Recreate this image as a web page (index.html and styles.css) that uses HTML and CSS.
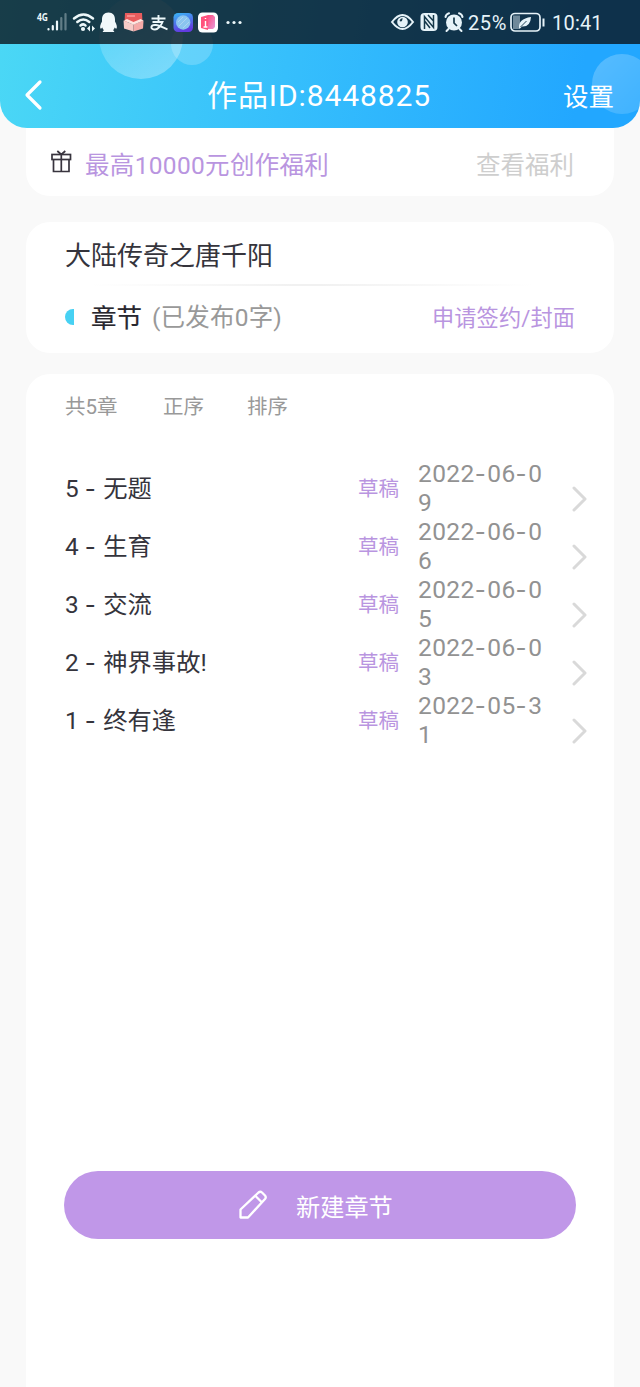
FILE: index.html
```html
<!DOCTYPE html>
<html lang="zh-CN">
<head>
<meta charset="utf-8">
<title>作品ID:8448825</title>
<link rel="stylesheet" href="styles.css">
</head>
<body>
<header class="top">
  <i class="bubble bubble-large"></i><i class="bubble bubble-small"></i><i class="bubble bubble-right"></i>
  <div class="status">
    <svg class="status-left" width="250" height="44" viewBox="0 0 250 44">
      <defs>
        <linearGradient id="app" x1="0" y1="0" x2="0.3" y2="1"><stop stop-color="#38b8f5"/><stop offset="1" stop-color="#623be0"/></linearGradient>
        <linearGradient id="info" x1="0" y1="0" x2="1" y2="1"><stop stop-color="#ff4b7d"/><stop offset="1" stop-color="#e79bdc"/></linearGradient>
      </defs>
      <text class="network" x="37" y="21" textLength="11" lengthAdjust="spacingAndGlyphs">4G</text>
      <g stroke="#edf8fa" stroke-width="2.2" stroke-linecap="round"><path d="M48.5 29v.5M52.8 26v3.5M57 21.500v8"/><path d="M61.300 18v11.500M65.500 14v15.500" opacity=".35"/></g>
      <g fill="none" stroke="#edf8fa" stroke-width="2.5" stroke-linecap="round"><path d="M74 18.500q9.500-8 19 0M77.300 22q6-5 12 0M80.500 25.500q3-2.300 5 0"/></g>
      <circle cx="83" cy="29" r="2.100" fill="#edf8fa"/>
      <path d="M90 25.500v6l-3-3zM92 25.500v6l3-3z" fill="#edf8fa"/>
      <path d="M108.500 12.500c-4.500 0-6.500 3-6.500 7v2c-1.500 2.500-2.500 5.500-1.500 7 .6.500 1.300-.5 1.800-1 .3 1.200.9 2 1.700 2.700-2 1-1.400 1.800 0 1.800h9c1.400 0 2-.8 0-1.800.8-.7 1.400-1.500 1.700-2.700.5.500 1.200 1.500 1.800 1 1-1.500 0-4.500-1.500-7v-2c0-4-2-7-6.500-7z" fill="#f1f8fa"/>
      <path d="M125 13h17l.5 9h-18z" fill="#e85c5d"/><path d="M127 16h8" stroke="#ffaaa8" stroke-width="1.200"/>
      <path d="M123.500 20.500l10 4v7l-9.500-3z" fill="#f7cbc7"/><path d="M143.500 20.500l-10 4v7l9.500-3z" fill="#f5aaa8"/><path d="M124 20.500l3-1.500 6.500 3 7-3 3 1.500-10 4.200z" fill="#fee4df"/>
      <path d="M151.500 18.500h14M158.500 15v7M152.500 22h10c-1.500 4-5 7.500-7.500 7.500-5 0-5-5 1-4.500 3 .2 7 2.500 11.500 4.300" fill="none" stroke="#edf8fa" stroke-width="1.900"/>
      <rect x="173.500" y="13" width="19.500" height="19" rx="4.500" fill="url(#app)"/><circle cx="183.200" cy="22.500" r="7.200" fill="#8bc5ef"/><path d="M178 22l5-5M179 26l8-8M183 28l6-6" stroke="#acd4f2" stroke-width="1"/>
      <rect x="198" y="12.500" width="20" height="20" rx="4.500" fill="#fff"/><path d="M201 17l7-2v15l-7-2z" fill="#ff527d"/><path d="M208 15h5l2 2v10l-2 2h-5z" fill="url(#info)"/><path d="M203.500 27h4M205.500 21v6M205.500 18v1" stroke="#fff" stroke-width="1.400"/>
      <g fill="#edf8fa"><circle cx="228" cy="22.500" r="1.600"/><circle cx="234" cy="22.500" r="1.600"/><circle cx="240" cy="22.500" r="1.600"/></g>
    </svg>
    <div class="status-right">
      <svg width="76" height="44" viewBox="0 0 76 44">
        <path d="M2 22q10.500-14 21 0-10.500 14-21 0z" fill="none" stroke="#e6f3f9" stroke-width="2"/><circle cx="12.500" cy="22" r="5.300" fill="#e6f3f9"/><path d="M12.500 18a4 4 0 0 0-3 3q3 1.500 3-3z" fill="#15384a"/>
        <rect x="30.500" y="13" width="17" height="18" rx="4" fill="#e6f3f9"/><path d="M34.500 29V16.500l9 11V15M38 15l5 5.500M35 21.500l5 6.500" fill="none" stroke="#15384a" stroke-width="1.500"/>
        <circle cx="64" cy="22.500" r="8" fill="#e6f3f9"/><path d="M55.500 17q.5-3 3.500-3.800M69 13.200q3 .8 3.500 3.800M58.500 29l-2 2M69.500 29l2 2" fill="none" stroke="#e6f3f9" stroke-width="2" stroke-linecap="round"/><path d="M64 17.500V23l3 3" fill="none" stroke="#15384a" stroke-width="1.700"/>
      </svg>
      <span class="percent">25%</span>
      <svg class="battery" width="38" height="44" viewBox="0 0 38 44"><rect x="2" y="13.500" width="29" height="17.500" rx="4" fill="none" stroke="#e6f3f9" stroke-width="1.700"/><path d="M4 15.500h7v13.500H4z" fill="#6f899a"/><path d="M10 28q-1-9 12-11-.5 10-9 9.500l-2 2z" fill="#e6f3f9"/><path d="M11.500 27l6-6" stroke="#254759"/><path d="M34.500 18.500v8" stroke="#e6f3f9" stroke-width="2"/></svg>
      <span class="clock">10:41</span>
    </div>
  </div>
  <nav class="nav">
    <svg class="back" width="20" height="34" viewBox="0 0 20 34"><path d="M16 4L3 17l13 13" fill="none" stroke="#fff" stroke-width="3.200" stroke-linecap="round" stroke-linejoin="round"/></svg>
    <h1>作品ID:8448825</h1>
    <span class="settings">设置</span>
  </nav>
</header>
<main>
  <section class="benefit">
    <svg width="22" height="24" viewBox="0 0 22 24"><g fill="none" stroke="#38343e" stroke-width="1.700"><rect x="1" y="4.500" width="18.500" height="5"/><path d="M2.500 9.500v12H18v-12M10.300 4.500v17M6.300 1l4 3.500 4-3.500"/></g></svg>
    <span class="benefit-name">最高10000元创作福利</span><span class="view">查看福利</span>
  </section>
  <section class="work">
    <h2>大陆传奇之唐千阳</h2>
    <div class="rule"></div>
    <div class="chapter"><i class="half"></i><b>章节</b><span class="published">(已发布0字)</span><span class="apply">申请签约/封面</span></div>
  </section>
  <section class="list">
    <div class="filters"><span>共5章</span><span>正序</span><span>排序</span></div>
    <div class="rows">
      <div class="row"><span class="name">5 <u>-</u> 无题</span><span class="draft">草稿</span><span class="date">2022<u>-</u>06<u>-</u>09</span><svg class="arrow" viewBox="0 0 16 26"><path d="M2 2l11 11L2 24"/></svg></div>
      <div class="row"><span class="name">4 <u>-</u> 生育</span><span class="draft">草稿</span><span class="date">2022<u>-</u>06<u>-</u>06</span><svg class="arrow" viewBox="0 0 16 26"><path d="M2 2l11 11L2 24"/></svg></div>
      <div class="row"><span class="name">3 <u>-</u> 交流</span><span class="draft">草稿</span><span class="date">2022<u>-</u>06<u>-</u>05</span><svg class="arrow" viewBox="0 0 16 26"><path d="M2 2l11 11L2 24"/></svg></div>
      <div class="row"><span class="name">2 <u>-</u> 神界事故!</span><span class="draft">草稿</span><span class="date">2022<u>-</u>06<u>-</u>03</span><svg class="arrow" viewBox="0 0 16 26"><path d="M2 2l11 11L2 24"/></svg></div>
      <div class="row"><span class="name">1 <u>-</u> 终有逢</span><span class="draft">草稿</span><span class="date">2022<u>-</u>05<u>-</u>31</span><svg class="arrow" viewBox="0 0 16 26"><path d="M2 2l11 11L2 24"/></svg></div>
    </div>
    <button class="create"><svg width="30" height="30" viewBox="0 0 30 30"><path d="M2.500 27.500v-8L20.500 2.500q1.800-1.500 3.500 0l3 3q1.500 1.700 0 3.500L10 27.500zM17.500 6l6.500 6.500" fill="none" stroke="#fff" stroke-width="2.300" stroke-linejoin="round"/></svg><span>新建章节</span></button>
  </section>
</main>
</body>
</html>
```
FILE: styles.css
```css
* { box-sizing: border-box; }
body { margin: 0; width: 640px; height: 1387px; overflow: hidden; background: #f9f9f9; color: #35343c; font-family: Roboto, "Noto Sans CJK SC", sans-serif; display: flex; flex-direction: column; }
h1, h2 { margin: 0; font-weight: 400; }
span { white-space: nowrap; }
.top { position: relative; height: 128px; flex: none; overflow: hidden; border-radius: 0 0 27px 27px; background: linear-gradient(100deg, #4bd8f5 0%, #36bffc 45%, #22a7ff 90%); }
.bubble { position: absolute; border-radius: 50%; background: linear-gradient(145deg, rgba(255,255,255,.08), rgba(255,255,255,.34)); }
.bubble-large { left: 99px; top: -5px; width: 84px; height: 84px; }
.bubble-small { left: 171px; top: 23px; width: 42px; height: 42px; background: rgba(255,255,255,.2); }
.bubble-right { left: 592px; top: 54px; width: 60px; height: 60px; background: linear-gradient(135deg, rgba(255,255,255,.24), rgba(255,255,255,.12)); }
.status { position: relative; height: 44px; background: rgba(8,12,18,.76); display: flex; justify-content: space-between; color: #e6f3f9; }
.network { font: 700 11px "Noto Sans", sans-serif; fill: #edf8fa; }
.status-right { width: 250px; display: flex; align-items: center; font: 20px/44px Roboto, sans-serif; }
.status-right svg { flex: none; }
.percent { width: 43px; padding: 2px 0 0 2px; letter-spacing: .6px; }
.battery { width: 38px; }
.clock { padding: 2px 0 0 5px; letter-spacing: .2px; }
.nav { position: relative; height: 84px; display: grid; grid-template-columns: 100px 1fr 100px; align-items: center; padding: 18px 26px 0 24px; color: #fff; }
.nav h1 { font-size: 30px; line-height: 48px; text-align: center; letter-spacing: .9px; padding-top: 2px; }
.settings { font-size: 25.500px; line-height: 46px; text-align: right; padding-top: 3px; }
main { flex: 1; display: flex; flex-direction: column; padding: 0 26px; }
section { background: #fff; }
.benefit { height: 68px; border-radius: 0 0 24px 24px; padding: 2px 40px 0 25px; display: flex; align-items: center; margin-bottom: 26px; font-size: 24.500px; }
.benefit svg { margin: -2px 12px 0 0; }
.benefit-name { letter-spacing: .32px; }
.benefit-name, .apply, .draft { color: #b995e0; }
.view { margin-left: auto; color: #cecece; }
.work { height: 131px; border-radius: 24px; margin-bottom: 21px; padding: 0 39px; }
.work h2 { height: 62px; font-size: 26px; line-height: 68px; }
.rule { height: 2px; background: linear-gradient(90deg, transparent 5%, #f1f1f1 45%, #f1f1f1 50%, transparent 92%); }
.chapter { height: 64px; display: flex; align-items: center; line-height: 66px; }
.half { width: 9px; height: 16px; border-radius: 9px 0 0 9px; background: #47d1f3; margin: -3px 17px 0 0; }
.chapter b { font-size: 25.500px; font-weight: 400; color: #28272e; -webkit-text-stroke: .2px #28272e; }
.published { font-size: 24.500px; color: #999; margin-left: 10px; letter-spacing: .2px; }
.apply { margin-left: auto; font-size: 22.200px; letter-spacing: .1px; }
.list { flex: 1; border-radius: 24px 24px 0 0; padding: 0 38px; display: flex; flex-direction: column; }
.filters { height: 64px; line-height: 66px; display: flex; font-size: 20.500px; color: #999; padding-left: 1px; }
.filters span:first-child { width: 53px; }
.filters span + span { margin-left: 45px; }
.filters span:last-child { margin-left: 43px; }
.rows { padding-top: 21px; }
.row { height: 58px; display: grid; grid-template-columns: 293px 60px 137px 16px; padding-left: 1px; width: 524px; }
.row u { font-family: Inter, sans-serif; font-size: 24px; line-height: 1; text-decoration: none; letter-spacing: 1.500px; }
.name { font-size: 24.300px; line-height: 60px; }
.draft { font-size: 20.500px; line-height: 60px; }
.date { font-size: 24.500px; font-family: Roboto, sans-serif; line-height: 29px; color: #929292; width: 134px; white-space: normal; word-break: break-all; overflow-wrap: anywhere; letter-spacing: .4px; }
.arrow { width: 16px; height: 26px; margin: 27px 0 0 17px; fill: none; stroke: #d9d9d9; stroke-width: 3; stroke-linecap: round; stroke-linejoin: round; }
.create { margin: 422px 0 0; height: 68px; width: 512px; border: 0; border-radius: 34px; background: #c097e8; color: #fff; font: 24.200px "Noto Sans CJK SC", sans-serif; display: flex; align-items: center; padding: 0 0 0 174px; }
.create span { margin: 0 0 0 28px; }
```
